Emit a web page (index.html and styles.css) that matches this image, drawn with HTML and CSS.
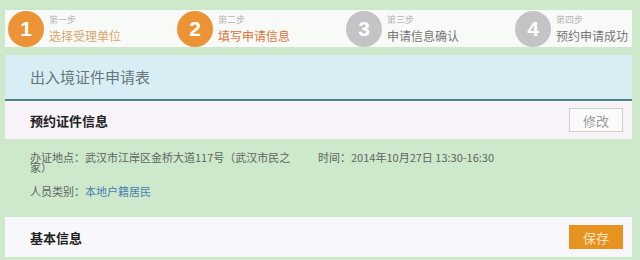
FILE: index.html
```html
<!DOCTYPE html>
<html lang="zh-CN">
<head>
    <meta charset="UTF-8">
    <title>出入境证件申请表</title>
    <link rel="stylesheet" href="styles.css">
</head>
<body>

<!-- Steps -->
<div class="steps">
    <div class="step done">
        <div class="step-num">1</div>
        <div class="step-text">
            <div class="step-small">第一步</div>
            <div class="step-name">选择受理单位</div>
        </div>
    </div>
    <div class="step current">
        <div class="step-num">2</div>
        <div class="step-text">
            <div class="step-small">第二步</div>
            <div class="step-name">填写申请信息</div>
        </div>
    </div>
    <div class="step">
        <div class="step-num">3</div>
        <div class="step-text">
            <div class="step-small">第三步</div>
            <div class="step-name">申请信息确认</div>
        </div>
    </div>
    <div class="step">
        <div class="step-num">4</div>
        <div class="step-text">
            <div class="step-small">第四步</div>
            <div class="step-name">预约申请成功</div>
        </div>
    </div>
</div>

<!-- Form -->
<div class="panel">
    <div class="panel-title">出入境证件申请表</div>

    <div class="section-head">
        <span>预约证件信息</span>
        <button class="btn btn-plain">修改</button>
    </div>

    <div class="info">
        <div class="info-row">
            <div class="info-place">办证地点：武汉市江岸区金桥大道117号（武汉市民之家）</div>
            <div class="info-time">时间：2014年10月27日 13:30-16:30</div>
        </div>
        <div class="info-row">
            <div>人员类别：<span class="link">本地户籍居民</span></div>
        </div>
    </div>

    <div class="section-head last">
        <span>基本信息</span>
        <button class="btn btn-orange">保存</button>
    </div>
</div>

</body>
</html>
```

FILE: styles.css
```css
body {
    font-family: "Noto Sans CJK SC", "Liberation Sans", sans-serif;
    background-color: #cde8cb;
    margin: 0;
    padding: 10px 8px 0 5px;
}

.steps {
    display: flex;
    height: 37px;
    background-color: #f7faf6;
    padding-left: 3px;
    overflow: hidden;
}

.step {
    display: flex;
    align-items: center;
    width: 169px;
    flex-shrink: 0;
}

.step-num {
    width: 36px;
    height: 36px;
    border-radius: 50%;
    background-color: #c4c4c6;
    color: #fff;
    font-family: "Liberation Sans", sans-serif;
    font-size: 21px;
    font-weight: bold;
    display: flex;
    align-items: center;
    justify-content: center;
    margin-right: 5px;
}

.step.done .step-num,
.step.current .step-num {
    background-color: #ec9336;
}

.step-small {
    font-size: 9px;
    color: #b8b8b8;
    line-height: 12px;
}

.step-name {
    font-size: 12px;
    color: #777;
    line-height: 16px;
    margin-top: 2px;
}

.step.done .step-name {
    color: #d7a66c;
}

.step.current .step-name {
    color: #e2733c;
}

.panel {
    margin-top: 8px;
}

.panel-title {
    background-color: #d9edf4;
    height: 44px;
    line-height: 44px;
    padding-left: 25px;
    font-size: 15px;
    color: #64777c;
    border-bottom: 2px solid #4d8584;
}

.section-head {
    display: flex;
    justify-content: space-between;
    align-items: center;
    height: 38px;
    background-color: #f7f3f8;
    padding: 0 9px 0 25px;
    font-size: 13px;
    font-weight: bold;
    color: #222;
}

.section-head.last {
    height: 40px;
    background-color: #f8f7fb;
}

.btn {
    width: 54px;
    height: 24px;
    font-family: inherit;
    font-size: 13px;
    cursor: pointer;
}

.btn-plain {
    background-color: #fafafa;
    border: 1px solid #cfcfcf;
    color: #9a9a9a;
}

.btn-orange {
    background-color: #e8921f;
    border: none;
    color: #fbe7c4;
}

.info {
    padding: 13px 0 16px 25px;
    font-size: 11px;
    color: #5d6660;
    height: 49px;
}

.info-row {
    display: flex;
    margin-bottom: 11px;
}

.info-place {
    width: 268px;
    line-height: 10px;
}

.info-time {
    margin-left: 20px;
    line-height: 10px;
}

.link {
    color: #4a7fb2;
}
```
